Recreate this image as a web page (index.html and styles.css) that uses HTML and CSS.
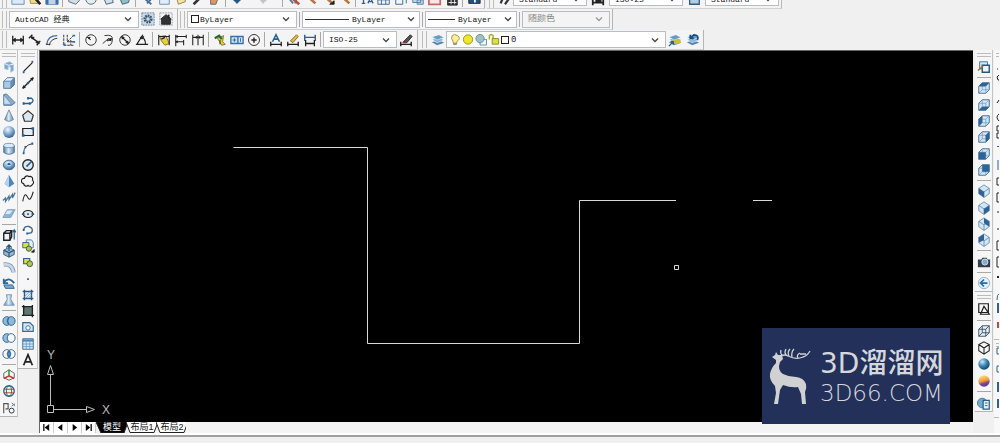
FILE: index.html
```html
<!DOCTYPE html>
<html lang="zh-CN">
<head>
<meta charset="utf-8">
<title>AutoCAD 经典</title>
<link rel="stylesheet" href="styles.css">
</head>
<body>
<svg class="defs" aria-hidden="true">
  <defs>
    <linearGradient id="steel" x1="0" y1="0" x2="1" y2="0"><stop offset="0" stop-color="#4f7fae"/><stop offset=".45" stop-color="#dcebf8"/><stop offset="1" stop-color="#5c86b0"/></linearGradient>
    <radialGradient id="ball" cx=".4" cy=".3" r=".7"><stop offset="0" stop-color="#eef6fd"/><stop offset=".5" stop-color="#8bb2d8"/><stop offset="1" stop-color="#38658f"/></radialGradient>
    <radialGradient id="globe" cx=".35" cy=".3" r=".75"><stop offset="0" stop-color="#c9ecf8"/><stop offset=".5" stop-color="#3e88b8"/><stop offset="1" stop-color="#123f66"/></radialGradient>
    <linearGradient id="sunset" x1=".3" y1="0" x2=".6" y2="1"><stop offset="0" stop-color="#ffe08a"/><stop offset=".5" stop-color="#ef9a35"/><stop offset=".7" stop-color="#8a4680"/><stop offset="1" stop-color="#4a3aa8"/></linearGradient>
    <symbol id="chevron" viewBox="0 0 8 8"><path d="M1 2.5 4 5.5 7 2.5" fill="none" stroke="#444" stroke-width="1.3"/></symbol>
    <symbol id="cube" viewBox="0 0 16 16"><path d="M2 6 6 2H14V10L10 14H2Z" fill="#d3e6f5" stroke="#3c678f"/><path d="M2 6H10V14M10 6 14 2M6 2V10H14M6 10 2 14" fill="none" stroke="#6f98bd" stroke-width=".8"/></symbol>
    <symbol id="iso" viewBox="0 0 16 16"><path d="M8 1 14 5V11L8 15.500 2 11V5Z" fill="#d3e6f5" stroke="#4a769e" stroke-width=".8"/><path d="M2 5 8 9 14 5M8 9V15" fill="none" stroke="#4a769e" stroke-width=".8"/></symbol>
    <symbol id="layers" viewBox="0 0 16 16"><path d="M1 10.5 9 8 15 11 7 14Z" fill="#5589b3"/><path d="M1 7.5 9 5 15 8 7 11Z" fill="#8ab3d2" stroke="#fff" stroke-width=".6"/><path d="M1 4.5 9 2 15 5 7 8Z" fill="#659bc4" stroke="#fff" stroke-width=".6"/></symbol>
  </defs>
</svg>

<header class="toolbars">
  <div class="row row-top">
    <div class="bar" role="toolbar" aria-label="标准">
      <span class="grip"></span>
      <button aria-label="新建"><svg viewBox="0 0 16 16"><path d="M1 1H15V14H1Z" fill="#dbeaf6" stroke="#5e89b0"/></svg></button>
      <button aria-label="打开"><svg viewBox="0 0 16 16"><path d="M1 3H8L14 13H3Z" fill="#edd98a" stroke="#9a8340"/><path d="M8 7 14 14" stroke="#222" stroke-width="3"/></svg></button>
      <button aria-label="保存"><svg viewBox="0 0 16 16"><path d="M1 1H15V14H1Z" fill="#3c70a8" stroke="#3c70a8"/><path d="M4 8H12V14H4Z" fill="#bcd3e8" stroke="none"/></svg></button>
      <span class="sep"></span>
      <button aria-label="打印"><svg viewBox="0 0 16 16"><path d="M2 4H14V10L10 14 2 11Z" fill="#d6dde4" stroke="#526475"/></svg></button>
      <button aria-label="打印预览"><svg viewBox="0 0 16 16"><circle cx="8" cy="8" r="6" fill="#e2edf4" stroke="#566"/></svg></button>
      <button aria-label="发布"><svg viewBox="0 0 16 16"><path d="M2 4H12L14 12 6 14Z" fill="#cfdfeb" stroke="#456"/></svg></button>
      <button aria-label="三维打印"><svg viewBox="0 0 16 16"><path d="M2 7 14 5 12 12 5 14Z" fill="#8fbfc9" stroke="#456"/></svg></button>
      <span class="sep"></span>
      <button aria-label="剪切"><svg viewBox="0 0 16 16"><path d="M2 5 13 14M8 13 13 8" stroke="#456a9b" stroke-width="2"/></svg></button>
      <button aria-label="复制"><svg viewBox="0 0 16 16"><path d="M3 2H14V14H3Z" fill="#dfeefa" stroke="#5e89b0"/></svg></button>
      <button aria-label="粘贴"><svg viewBox="0 0 16 16"><path d="M2 3 12 2 13 11 5 14Z" fill="#f1e4a5" stroke="#8a7c45"/></svg></button>
      <button aria-label="特性匹配"><svg viewBox="0 0 16 16"><path d="M3 14 13 4" stroke="#333" stroke-width="3"/></svg></button>
      <button aria-label="块编辑器"><svg viewBox="0 0 16 16"><path d="M3 3H13L9 14H3Z" fill="#f09348" stroke="#386ca8"/></svg></button>
      <span class="sep"></span>
      <button aria-label="放弃"><svg viewBox="0 0 16 16"><path d="M4 9H12L8 13Z" fill="#20568f" stroke="#20568f"/></svg></button>
      <span class="space"></span>
      <button aria-label="重做"><svg viewBox="0 0 16 16"><path d="M5 9H12L8 13Z" fill="#c0c5c9" stroke="#c0c5c9"/></svg></button>
      <span class="space"></span><span class="sep"></span>
      <button aria-label="平移"><svg viewBox="0 0 16 16"><path d="M2 4 14 14M10 8V13" stroke="#b65145" stroke-width="3"/><path d="M2 7 7 13" stroke="#4674a7" stroke-width="2"/></svg></button>
      <button aria-label="缩放"><svg viewBox="0 0 16 16"><path d="M3 4 13 13" stroke="#b57643" stroke-width="3"/></svg></button>
      <button aria-label="窗口缩放"><svg viewBox="0 0 16 16"><path d="M3 4 12 12" stroke="#b57643" stroke-width="3"/><path d="M10 14 15 10V14Z" fill="#222"/></svg></button>
      <button aria-label="上一个"><svg viewBox="0 0 16 16"><path d="M3 4 13 13" stroke="#b57643" stroke-width="3"/></svg></button>
      <span class="sep"></span>
      <button aria-label="特性"><svg viewBox="0 0 16 16"><path d="M2 13H6M4 9V13M9 13 12 7 15 13M9 11H14" stroke="#355f8d" stroke-width="1.5"/></svg></button>
      <button aria-label="设计中心"><svg viewBox="0 0 16 16"><path d="M1 3H14V14H1ZM1 9H14M5 9V14M10 9V14" fill="#edf5fb" stroke="#315b88"/></svg></button>
      <button aria-label="工具选项板"><svg viewBox="0 0 16 16"><path d="M2 2H10V14H2ZM8 8H14V13" fill="#edf5fb" stroke="#315b88"/></svg></button>
      <button aria-label="图纸集"><svg viewBox="0 0 16 16"><path d="M2 7H11V12H2ZM7 9H14V14H7Z" fill="#bdd5e8" stroke="#4d7ba4"/></svg></button>
      <button aria-label="标记集"><svg viewBox="0 0 16 16"><path d="M1 4H14V14H1Z" fill="#f8e8e8" stroke="#c96767" stroke-width="2"/></svg></button>
      <button aria-label="计算器"><svg viewBox="0 0 16 16"><path d="M3 2H14V15H3Z" fill="#333"/><path d="M4 8H13M4 12H13M7 6V14M11 6V14" stroke="#eee"/></svg></button>
      <span class="sep"></span>
      <button aria-label="帮助"><svg viewBox="0 0 16 16"><path d="M2 2H15V13H2Z" fill="#1d528c"/><path d="M8 9H9V12" stroke="#fff" stroke-width="2"/></svg></button>
    </div>
    <div class="bar bar-gap" role="toolbar" aria-label="样式">
      <span class="grip"></span>
      <button aria-label="文字样式"><svg viewBox="0 0 16 16"><path d="M3 13 6 6M8 14 13 7" stroke="#333" stroke-width="2.5"/></svg></button>
      <span class="combo w74"><select aria-label="文字样式列表"><option>Standard</option></select><svg><use href="#chevron"/></svg></span>
      <button class="wide" aria-label="标注样式"><svg viewBox="0 0 16 16"><path d="M2 12H14M2 9V15M14 9V15M5 10H12" stroke="#222" stroke-width="2"/></svg></button>
      <span class="combo w74"><select aria-label="标注样式列表"><option>ISO-25</option></select><svg><use href="#chevron"/></svg></span>
      <button class="wide" aria-label="表格样式"><svg viewBox="0 0 16 16"><path d="M3 3H14V14H3Z" fill="#b5cde3" stroke="#315b88" stroke-width="1.5"/></svg></button>
      <span class="combo w74"><select aria-label="表格样式列表"><option>Standard</option></select><svg><use href="#chevron"/></svg></span>
    </div>
  </div>

  <div class="row row-mid">
    <div class="bar" role="toolbar" aria-label="工作空间">
      <span class="grip"></span>
      <span class="combo w130"><select aria-label="工作空间"><option>AutoCAD 经典</option></select><svg><use href="#chevron"/></svg></span>
      <button class="wide" aria-label="工作空间设置"><svg viewBox="0 0 16 16"><path d="M1 1H15V15H1Z" fill="#cbdbe8" stroke="#5c7690" stroke-dasharray="2 1"/><circle cx="8" cy="8" r="4" stroke="#36516c" stroke-width="2.4" stroke-dasharray="2 1"/><circle cx="8" cy="8" r="2.6" stroke="#36516c"/></svg></button>
      <button class="wide" aria-label="我的工作空间"><svg viewBox="0 0 16 16"><path d="M1 1H15V15H1Z" stroke="#8496a5" stroke-dasharray="2 1"/><path d="M2 8 8 3 14 8H13V14H3V8Z" fill="#333"/><path d="M11 3V7" stroke-width="2"/></svg></button>
    </div>
    <div class="bar" role="toolbar" aria-label="特性">
      <span class="grip"></span>
      <span class="combo w110 has-swatch"><i class="swatch"></i><select aria-label="颜色"><option>ByLayer</option></select><svg><use href="#chevron"/></svg></span>
      <span class="sep"></span>
      <span class="combo w118 has-line"><i class="line"></i><select aria-label="线型"><option>ByLayer</option></select><svg><use href="#chevron"/></svg></span>
      <span class="sep"></span>
      <span class="combo w92 has-line"><i class="line"></i><select aria-label="线宽"><option>ByLayer</option></select><svg><use href="#chevron"/></svg></span>
      <span class="sep"></span>
      <span class="combo w86 off"><select aria-label="打印样式" disabled><option>随颜色</option></select><svg><use href="#chevron"/></svg></span>
    </div>
  </div>

  <div class="row row-low">
    <div class="bar" role="toolbar" aria-label="标注">
      <span class="grip"></span>
      <button aria-label="线性"><svg viewBox="0 0 16 16"><path d="M2 3V13M14 3V13M2 8H14" stroke-width="1.5"/><path d="M2 8 5 6V10ZM14 8 11 6V10Z" fill="#222"/></svg></button>
      <button aria-label="对齐"><svg viewBox="0 0 16 16"><path d="M1 6 5 2M10 14 14 9M4 5 12 11" stroke-width="1.5"/><path d="M3 4 7 5 5 7ZM13 12 9 11 11 9Z" fill="#222"/></svg></button>
      <button aria-label="弧长"><svg viewBox="0 0 16 16"><path d="M2 13Q3 3 14 3" stroke="#4475a4" stroke-width="1.6"/><path d="M5 14Q6 7 14 6M1 13H6"/></svg></button>
      <button aria-label="坐标"><svg viewBox="0 0 16 16"><path d="M2 2V14H14M6 2V10H13M6 10 13 3M10 8V14" stroke-dasharray="3 1"/><path d="M1 13H4M12 3H15M12 10H15" stroke="#3673ad" stroke-width="2"/></svg></button>
      <span class="sep"></span>
      <button aria-label="半径"><svg viewBox="0 0 16 16"><circle cx="8" cy="8" r="6"/><path d="M8 8 4 5"/><path d="M4 5 7 5 6 7Z" fill="#222"/></svg></button>
      <button aria-label="折弯"><svg viewBox="0 0 16 16"><path d="M4 3Q14 1 13 8T8 14M2 12 9 6 7 9 12 8"/><path d="M9 7 12 6 11 9Z" fill="#222"/></svg></button>
      <button aria-label="直径"><svg viewBox="0 0 16 16"><circle cx="8" cy="8" r="6"/><path d="M4 4 12 12" stroke-width="1.4"/><path d="M4 4 7 5 5 7ZM12 12 9 11 11 9Z" fill="#222"/></svg></button>
      <button aria-label="角度"><svg viewBox="0 0 16 16"><path d="M9 2 2 13H15M7 4Q12 6 12 13" stroke-width="1.4"/><path d="M6 5 10 4 8 7Z" fill="#222"/></svg></button>
      <span class="sep"></span>
      <button aria-label="快速标注"><svg viewBox="0 0 16 16"><path d="M3 4 10 3 14 12 9 14 5 9Z" fill="#e4d331" stroke="#777022"/><path d="M2 2V14M14 2V14M2 4H14M5 7 9 5" stroke-width="1.3"/></svg></button>
      <button aria-label="基线"><svg viewBox="0 0 16 16"><path d="M2 2V15M2 4H14M2 10H11M14 2V6M11 8V14" stroke-width="1.2"/><path d="M2 4 4 3V5ZM2 10 4 9V11Z" fill="#222"/></svg></button>
      <button aria-label="连续"><svg viewBox="0 0 16 16"><path d="M2 2V14M8 2V14M14 2V14M2 5H14" stroke-width="1.2"/><path d="M8 5 6 4V6ZM8 5 10 4V6Z" fill="#222"/></svg></button>
      <span class="sep"></span>
      <button aria-label="公差"><svg viewBox="0 0 16 16"><path d="M5 6 12 3 11 10 14 13 10 14Z" fill="#e1d231" stroke="#7c7429"/><path d="M2 6 7 3 10 7" stroke="#26673d" stroke-width="2.4"/><path d="M8 8V13"/></svg></button>
      <button aria-label="形位公差"><svg viewBox="0 0 16 16"><path d="M1 4H15V12H1ZM9 4V12" fill="#cfe3f5" stroke="#3470aa" stroke-width="1.5"/><path d="M3 8H7M5 6V10M12 6V10" stroke="#245f99"/></svg></button>
      <button aria-label="圆心标记"><svg viewBox="0 0 16 16"><circle cx="8" cy="8" r="6.3"/><path d="M5 8H11M8 5V11" stroke-width="1.6"/></svg></button>
      <span class="sep"></span>
      <button aria-label="编辑标注"><svg viewBox="0 0 16 16"><path d="M4 10 8 2 12 10M5 7H11" stroke="#245f99" stroke-width="1.8"/><path d="M2 10V15M14 10V15M2 13H14" stroke-width="1.5"/></svg></button>
      <button aria-label="编辑标注文字"><svg viewBox="0 0 16 16"><path d="M5 9 12 2 14 4 8 11Z" fill="#e6b842" stroke="#806328"/><path d="M2 10V15M14 10V15M2 13H14" stroke-width="1.5"/></svg></button>
      <button aria-label="标注更新"><svg viewBox="0 0 16 16"><path d="M2 2V9M14 2V9M2 5H14" stroke="#245f99" stroke-width="1.6"/><path d="M3 8V15M13 8V15M3 12H13" stroke-width="1.5"/></svg></button>
      <span class="sep"></span>
      <span class="combo w74"><select aria-label="标注样式"><option>ISO-25</option></select><svg><use href="#chevron"/></svg></span>
      <button class="wide" aria-label="标注样式管理"><svg viewBox="0 0 16 16"><path d="M5 10 13 2 15 4 9 11Z" fill="#555"/><path d="M2 10V15M14 10V15M2 13H14" stroke-width="1.6"/><path d="M4 11H8" stroke="#a33" stroke-width="1.6"/></svg></button>
    </div>
    <div class="bar bar-gap" role="toolbar" aria-label="图层">
      <span class="grip"></span>
      <button aria-label="图层特性"><svg viewBox="0 0 16 16"><use href="#layers" stroke="none"/></svg></button>
      <span class="combo layer-combo">
        <span class="layer-state" aria-hidden="true">
          <svg viewBox="0 0 12 14"><path d="M4 9Q1 6 3 3T9 3T8 9V11H4Z" fill="#f8ee9b" stroke="#a49133"/><path d="M4 12H8" stroke="#555"/></svg>
          <svg viewBox="0 0 12 14"><circle cx="6" cy="7" r="5" fill="#f0e52f" stroke="#959423"/></svg>
          <svg viewBox="0 0 12 14"><path d="M5 7H12V13H5Z" fill="#eef6fa" stroke="#658da6"/><circle cx="5" cy="6" r="4.5" fill="#9bbfca" stroke="#71927e"/></svg>
          <svg viewBox="0 0 12 14"><path d="M1 7V3Q3 0 5 3V7" stroke="#aaa827" stroke-width="1.6"/><path d="M4 6H11V12H4Z" fill="#dddf42" stroke="#868b24"/></svg>
          <i class="swatch"></i>
        </span>
        <select aria-label="图层"><option>0</option></select><svg class="arrow"><use href="#chevron"/></svg>
      </span>
      <button class="wide" aria-label="置为当前"><svg viewBox="0 0 16 16"><use href="#layers" stroke="none"/><path d="M5 8 14 7 15 11 8 13Z" fill="#cdbd3c" stroke="none"/><path d="M1 15 6 10M3 10H6V13" stroke="#245f99" stroke-width="1.5"/></svg></button>
      <button aria-label="上一个图层"><svg viewBox="0 0 16 16"><use href="#layers" stroke="none"/><path d="M13 8Q15 2 9 2L6 5M5 2V6H9" stroke="#174f89" stroke-width="2"/></svg></button>
    </div>
  </div>
</header>

<main class="workspace">
  <div class="dock dock-model" role="toolbar" aria-label="建模" aria-orientation="vertical">
    <span class="grip"></span>
    <button aria-label="多段体"><svg viewBox="0 0 16 16"><path d="M3 4 9 2 13 5V12L10 14V8L7 7V11L3 10Z" fill="#78a5cf" stroke="#a9c5df"/><path d="M3 4 7 6 13 5" stroke="#fff"/></svg></button>
    <button aria-label="长方体"><svg viewBox="0 0 16 16"><path d="M2 6 6 2H14V10L10 14H2Z" fill="#6592bd" stroke="#365c83"/><path d="M2 6 6 2H14L10 6Z" fill="#e3f0fb" stroke="#6d8fb0"/><path d="M2 6H10V14H2Z" fill="#a8c9e6" stroke="#6d8fb0"/></svg></button>
    <button aria-label="楔体"><svg viewBox="0 0 16 16"><path d="M2 2 5 1 15 11 11 14H2Z" fill="#89add0" stroke="#456d93"/><path d="M2 2 11 13H2Z" fill="#c6dcef" stroke="#6d8fb0"/></svg></button>
    <button aria-label="圆锥体"><svg viewBox="0 0 16 16"><path d="M8 1 3 12Q8 16 13 12Z" fill="url(#steel)" stroke="#68859f"/></svg></button>
    <button aria-label="球体"><svg viewBox="0 0 16 16"><circle cx="8" cy="8" r="6.8" fill="url(#ball)" stroke="none"/></svg></button>
    <button aria-label="圆柱体"><svg viewBox="0 0 16 16"><path d="M2 4V12Q8 16 14 12V4Z" fill="url(#steel)" stroke="#456d93"/><ellipse cx="8" cy="4" rx="6" ry="2.5" fill="#d9eaf8" stroke="#6f92b4"/></svg></button>
    <button aria-label="圆环体"><svg viewBox="0 0 16 16"><ellipse cx="8" cy="8" rx="6.5" ry="5.5" fill="url(#ball)" stroke="#426c95"/><ellipse cx="8" cy="7" rx="2.5" ry="1.8" fill="#285884" stroke="#dcebf7"/></svg></button>
    <button aria-label="棱锥体"><svg viewBox="0 0 16 16"><path d="M8 1 3 11 8 15 14 11Z" fill="#4e84b8" stroke="none"/><path d="M8 1 3 11 8 15Z" fill="#b3d2eb" stroke="none"/></svg></button>
    <button aria-label="螺旋"><svg viewBox="0 0 16 16"><path d="M1 12 4 9 4 13 8 7 8 11 12 5 12 9 15 3" stroke="#4b7499" stroke-width="1.4"/></svg></button>
    <button aria-label="平面曲面"><svg viewBox="0 0 16 16"><path d="M6 3H15L10 12H1Z" fill="#8db3d6" stroke="#7c9dbb"/><path d="M6 4H12L9 8H4Z" fill="#dbeafa" stroke="none"/></svg></button>
    <span class="sep"></span>
    <button aria-label="拉伸"><svg viewBox="0 0 16 16"><path d="M2 6H9V14H2ZM2 6 5 3H11L9 6M11 3V10L9 14" fill="#edf4fa" stroke-width="1.6"/><path d="M14 13V3M12 5 14 2 16 5" stroke="#245f99" stroke-width="1.4"/></svg></button>
    <button aria-label="按住并拖动"><svg viewBox="0 0 16 16"><path d="M2 7 8 4 14 7V12L8 15 2 12Z" fill="#94b7d4" stroke="#315777"/><path d="M2 7 8 10 14 7M8 10V15M8 8V1M5 4 8 1 11 4" stroke="#315777" stroke-width="1.4"/></svg></button>
    <button aria-label="扫掠"><svg viewBox="0 0 16 16"><path d="M2 4Q12 3 13 13" stroke="#7e9cb4" stroke-width="5"/><path d="M2 4Q12 3 13 13" stroke="#c5d9e9" stroke-width="3"/></svg></button>
    <button aria-label="旋转"><svg viewBox="0 0 16 16"><path d="M2 9H12L14 13H4Z" fill="#77a9d2" stroke="#315f8b"/><path d="M14 7Q8-1 2 6M2 2V7H7" stroke="#22689f" stroke-width="2"/></svg></button>
    <button aria-label="放样"><svg viewBox="0 0 16 16"><path d="M5 2H11L10 7 14 14H2L6 7Z" fill="url(#steel)" stroke="#7595b1"/></svg></button>
    <span class="sep"></span>
    <button aria-label="并集"><svg viewBox="0 0 16 16"><ellipse cx="5.500" cy="8" rx="4.500" ry="5" fill="#8eb9dc" stroke="#285e8e"/><ellipse cx="10.500" cy="8" rx="4.500" ry="5" fill="#8eb9dc" stroke="#285e8e"/><path d="M8 4Q5 8 8 12" stroke="#285e8e"/></svg></button>
    <button aria-label="差集"><svg viewBox="0 0 16 16"><ellipse cx="5.500" cy="8" rx="4.500" ry="5" fill="#93bddd" stroke="#285e8e"/><ellipse cx="10.500" cy="8" rx="4.500" ry="5" fill="#f3f8fc" stroke="#285e8e"/></svg></button>
    <button aria-label="交集"><svg viewBox="0 0 16 16"><ellipse cx="5.500" cy="8" rx="4.500" ry="5" stroke="#285e8e"/><ellipse cx="10.500" cy="8" rx="4.500" ry="5" stroke="#285e8e"/><path d="M8 4Q11 8 8 12 5 8 8 4" fill="#73a6d0" stroke="#285e8e"/></svg></button>
    <span class="sep"></span>
    <button aria-label="三维移动"><svg viewBox="0 0 16 16"><path d="M2 6 8 2 14 6V11L8 14 2 11Z" stroke="#555"/><path d="M8 2V9" stroke="#26872f" stroke-width="1.6"/><path d="M8 9 2 12" stroke="#c33" stroke-width="1.8"/><path d="M8 9 14 12" stroke="#ca3333" stroke-width="1.8"/></svg></button>
    <button aria-label="三维旋转"><svg viewBox="0 0 16 16"><circle cx="8" cy="8" r="6" stroke="#2761a5" stroke-width="1.5"/><ellipse cx="8" cy="8" rx="3" ry="6" stroke="#26773a"/><path d="M2 6H14M2 10H14" stroke="#bc3434"/></svg></button>
    <button aria-label="三维对齐"><svg viewBox="0 0 16 16"><path d="M2 14V3H7V9H4" stroke="#555" stroke-width="1.3"/><path d="M11 2 13 4 11 6M14 3V6" stroke="#26679e"/><circle cx="11" cy="11" r="2.800"/></svg></button>
  </div>

  <div class="dock dock-draw" role="toolbar" aria-label="绘图" aria-orientation="vertical">
    <span class="grip"></span>
    <button aria-label="直线"><svg viewBox="0 0 16 16"><path d="M3 13 13 3" stroke-width="1.4"/><path d="M2 14H4M12 2H14" stroke="#245f99" stroke-width="2.5"/></svg></button>
    <button aria-label="构造线"><svg viewBox="0 0 16 16"><path d="M2 14 14 2" stroke-width="1.6"/><path d="M2 14 5 13 3 11ZM14 2 11 3 13 5Z" fill="#222"/><circle cx="8" cy="8" r="1.500" fill="#245f99" stroke="none"/></svg></button>
    <button aria-label="多段线"><svg viewBox="0 0 16 16"><path d="M2 12H11Q16 9 12 6H8" stroke="#2a5f93" stroke-width="1.5"/><path d="M2 12H4M9 12H11M7 6H9" stroke="#245f99" stroke-width="2.7"/></svg></button>
    <button aria-label="正多边形"><svg viewBox="0 0 16 16"><path d="M8 2 14 7 12 14H4L2 7Z" fill="#dae8f3" stroke="#333" stroke-width="1.4"/></svg></button>
    <button aria-label="矩形"><svg viewBox="0 0 16 16"><path d="M2 4H14V12H2Z" fill="#e4eef7" stroke-width="1.4"/><path d="M1 12H4M12 4H15" stroke="#245f99" stroke-width="3"/></svg></button>
    <button aria-label="圆弧"><svg viewBox="0 0 16 16"><path d="M3 14Q3 5 13 3"/><path d="M2 14H4M4 7H6M12 3H14" stroke="#245f99" stroke-width="2.5"/></svg></button>
    <button aria-label="圆"><svg viewBox="0 0 16 16"><circle cx="8" cy="8" r="6" fill="#dce9f4" stroke-width="1.5"/><path d="M7 9 12 4M6 9H8" stroke="#245f99" stroke-width="1.8"/></svg></button>
    <button aria-label="修订云线"><svg viewBox="0 0 16 16"><path d="M4 5A3 3 0 0 1 9 3A3 3 0 0 1 13 7A3 3 0 0 1 13 12A3 3 0 0 1 8 13A3 3 0 0 1 3 11A3 3 0 0 1 4 5Z" stroke-width="1.3"/></svg></button>
    <button aria-label="样条曲线"><svg viewBox="0 0 16 16"><path d="M2 13C4 2 6 5 8 9S12 9 14 2" stroke-width="1.2"/></svg></button>
    <button aria-label="椭圆"><svg viewBox="0 0 16 16"><ellipse cx="8" cy="8" rx="5.500" ry="4" fill="#dfeaf3" stroke-width="1.4"/><path d="M1 8H4M12 8H15M7 8H9" stroke="#245f99" stroke-width="2"/></svg></button>
    <button aria-label="椭圆弧"><svg viewBox="0 0 16 16"><path d="M3 8Q4 3 9 4 15 6 12 11L8 12" stroke="#426c91" stroke-width="1.6"/><path d="M2 8H4M6 12H8" stroke="#245f99" stroke-width="2.5"/></svg></button>
    <button aria-label="插入块"><svg viewBox="0 0 16 16"><path d="M6 1H12L14 4V10H6Z" fill="#e5f0f8" stroke="#4677a3"/><path d="M2 4H9V10H2Z" fill="#d5e047" stroke="#315f8d"/><circle cx="9" cy="11" r="3" fill="#abc94a" stroke="#354"/><path d="M12 15H15V12Z" fill="#222"/></svg></button>
    <button aria-label="创建块"><svg viewBox="0 0 16 16"><path d="M3 4H10V10H3Z" fill="#d5e047" stroke="#315f8d" stroke-width="1.3"/><circle cx="10" cy="10" r="3.300" fill="#abc94a" stroke="#354"/></svg></button>
    <button aria-label="点"><svg viewBox="0 0 16 16"><path d="M7 8H9" stroke="#245f99" stroke-width="2"/></svg></button>
    <button aria-label="图案填充"><svg viewBox="0 0 16 16"><path d="M4 2V14M12 2V14M2 4H14M2 12H14" stroke="#23598e" stroke-width="1.6"/><path d="M4 10 10 4M5 12 12 5M8 12 12 8" stroke="#6592bd"/></svg></button>
    <button aria-label="渐变色"><svg viewBox="0 0 16 16"><path d="M3 3H13V13H3Z" fill="#5f7772" stroke-width="1.5"/><path d="M3 1V5M13 11V15M1 3H4M12 13H15M13 1V3M1 13H3" stroke-width="1.5"/></svg></button>
    <button aria-label="面域"><svg viewBox="0 0 16 16"><path d="M2 3H10L14 7V13H2Z" fill="#d5e6f5" stroke="#376b9b" stroke-width="1.4"/><circle cx="8" cy="9" r="2.500" fill="#f7fbff" stroke="#376b9b"/></svg></button>
    <button aria-label="表格"><svg viewBox="0 0 16 16"><path d="M2 2H14V14H2Z" fill="#ddebf8" stroke="#315f8d"/><path d="M2 4H14" stroke="#4c7fb5" stroke-width="2.5"/><path d="M2 8H14M2 11H14M6 4V14M10 4V14" stroke="#6a98c1"/></svg></button>
    <button aria-label="多行文字"><svg viewBox="0 0 16 16"><path d="M3 14 8 2 13 14M5 10H11" stroke-width="2"/></svg></button>
  </div>

  <section class="editor" aria-label="绘图区">
    <svg class="drawing" role="img" aria-label="图形">
      <g class="ink">
        <path d="M193.500 96.500H327.500V292.500H539.500V149.500H636M713 149.500H732"/>
        <path d="M634.500 214.500H638.500V218.500H634.500Z"/>
      </g>
      <g class="ucs">
        <path d="M7.500 354.500H13.500V361.500H7.500ZM10.500 354V323M14 358.500H46M10.500 314.500 7.500 323.500H13.500ZM54.500 358.500 46.500 355.500V361.500Z"/>
        <text x="7" y="308">Y</text><text x="62" y="363">X</text>
      </g>
    </svg>
    <nav class="tabs" aria-label="布局">
      <button class="step" aria-label="第一个"><svg viewBox="0 0 12 10"><path d="M3 1V9" stroke-width="1.6"/><path d="M9 1V9L4 5Z" fill="#000" stroke="none"/></svg></button>
      <button class="step" aria-label="前一个"><svg viewBox="0 0 12 10"><path d="M8 1V9L3 5Z" fill="#000" stroke="none"/></svg></button>
      <button class="step" aria-label="后一个"><svg viewBox="0 0 12 10"><path d="M4 1V9L9 5Z" fill="#000" stroke="none"/></svg></button>
      <button class="step" aria-label="最后一个"><svg viewBox="0 0 12 10"><path d="M9 1V9" stroke-width="1.6"/><path d="M3 1V9L8 5Z" fill="#000" stroke="none"/></svg></button>
      <button class="tab active"><svg viewBox="0 0 32 11" preserveAspectRatio="none"><path d="M0 0H32L28 11H5Z"/></svg><span>模型</span></button>
      <button class="tab"><svg viewBox="0 0 32 11" preserveAspectRatio="none"><path d="M0 0 4 10.500H28L32 0"/></svg><span>布局1</span></button>
      <button class="tab"><svg viewBox="0 0 32 11" preserveAspectRatio="none"><path d="M0 0 4 10.500H28L32 0"/></svg><span>布局2</span></button>
      <span class="scroll"></span>
    </nav>
    <aside class="brand">
      <svg viewBox="0 0 42 57" aria-hidden="true"><path class="body" d="M3 9 6 7 7 4 9 7 13 7 14 11 11 14Q8 22 14 26 20 29 27 29 35 30 37 36 38 40 36 44L37 56H33L32 46 29 39Q22 40 14 37L11 42 9 56H5L7 45 6 38Q0 32 1 26 2 20 7 15L7 12Z"/><path class="antler" d="M12 8Q16 6 19 8 27 12 34 9 38 8 41 3M13 7Q11 5 12 2M17 7Q15 4 17 1M20 8Q18 4 21 1M23 9Q22 4 25 1M29 10Q27 7 31 5M31 6H37"/></svg>
      <div class="brand-text"><strong>3D溜溜网</strong><span>3D66.COM</span></div>
    </aside>
  </section>

  <div class="side">
    <div class="dock dock-view" role="toolbar" aria-label="视图" aria-orientation="vertical">
      <span class="grip"></span>
      <button aria-label="命名视图"><svg viewBox="0 0 16 16"><path d="M3 2H12V10H3Z" fill="#d4e5f3" stroke="#386f9f"/><path d="M6 6H14V14H6Z" fill="#f1f6fa" stroke="#21588b" stroke-width="1.6"/><path d="M1 12 7 7" stroke="#b16b3a" stroke-width="1.6"/></svg></button>
      <span class="sep"></span>
      <button aria-label="俯视"><svg viewBox="0 0 16 16"><use href="#cube"/><path class="face" d="M2 6 6 2H14L10 6Z"/></svg></button>
      <button aria-label="仰视"><svg viewBox="0 0 16 16"><use href="#cube"/><path class="face" d="M2 14 6 10H14L10 14Z"/></svg></button>
      <button aria-label="左视"><svg viewBox="0 0 16 16"><use href="#cube"/><path class="face" d="M2 6 6 2V10L2 14Z"/></svg></button>
      <button aria-label="右视"><svg viewBox="0 0 16 16"><use href="#cube"/><path class="face" d="M10 6 14 2V10L10 14Z"/></svg></button>
      <button aria-label="前视"><svg viewBox="0 0 16 16"><use href="#cube"/><path class="face" d="M2 6H10V14H2Z"/></svg></button>
      <button aria-label="后视"><svg viewBox="0 0 16 16"><use href="#cube"/><path class="face" d="M6 2H14V10H6Z"/></svg></button>
      <span class="sep"></span>
      <button aria-label="西南等轴测"><svg viewBox="0 0 16 16"><use href="#iso"/><path class="face" d="M2 5 8 9V15L2 11Z"/></svg></button>
      <button aria-label="东南等轴测"><svg viewBox="0 0 16 16"><use href="#iso"/><path class="face" d="M8 9 14 5V11L8 15Z"/></svg></button>
      <button aria-label="东北等轴测"><svg viewBox="0 0 16 16"><use href="#iso"/><path class="face" d="M8 1 14 5V11L8 7Z"/></svg></button>
      <button aria-label="西北等轴测"><svg viewBox="0 0 16 16"><use href="#iso"/><path class="face" d="M2 5 8 1V8L2 11Z"/></svg></button>
      <span class="sep"></span>
      <button aria-label="相机"><svg viewBox="0 0 16 16"><path d="M1 5H5L6 3H11L12 5H15V14H1Z" fill="#343f4b" stroke="none"/><circle cx="9" cy="8" r="3.500" fill="#84add0" stroke="#dbe8f1"/></svg></button>
      <span class="sep"></span>
      <button aria-label="上一视图"><svg viewBox="0 0 16 16"><circle cx="8" cy="8" r="6.500" fill="#e7f0f7" stroke="#9aadbd"/><path d="M12 8H5M8 4 4 8 8 12" stroke="#276da7" stroke-width="2"/></svg></button>
    </div>
    <div class="dock dock-style" role="toolbar" aria-label="视觉样式" aria-orientation="vertical">
      <span class="grip"></span>
      <button aria-label="二维线框"><svg viewBox="0 0 16 16"><path d="M2 2H13V12H2ZM8 5 14 14H4Z" stroke-width="1.4"/></svg></button>
      <span class="sep"></span>
      <button aria-label="三维线框"><svg viewBox="0 0 16 16"><path d="M2 6 6 2H14V10L10 14H2ZM2 6H10V14M10 6 14 2M6 2V10H14M6 10 2 14" fill="#e3eff8" stroke="#334b60"/></svg></button>
      <button aria-label="三维隐藏"><svg viewBox="0 0 16 16"><path d="M8 1 14 4V11L8 15 2 11V4ZM2 4 8 8 14 4M8 8V15" stroke-width="1.2"/></svg></button>
      <button aria-label="真实"><svg viewBox="0 0 16 16"><circle cx="8" cy="8" r="6.500" fill="url(#globe)" stroke="none"/></svg></button>
      <button aria-label="概念"><svg viewBox="0 0 16 16"><circle cx="8" cy="8" r="6.500" fill="url(#sunset)" stroke="none"/></svg></button>
      <span class="sep"></span>
      <button aria-label="管理视觉样式"><svg viewBox="0 0 16 16"><circle cx="6" cy="8" r="5.500" fill="#74aaca" stroke="#3b789f"/><path d="M7 5H14V15H7Z" fill="#e6f0f8" stroke="#285e8e" stroke-width="1.4"/><path d="M9 8H12M9 11H12" stroke="#285e8e"/></svg></button>
    </div>
  </div>

  <div class="edge" aria-hidden="true">
    <svg>
      <path d="M2 3.500H5M2 6.500H5" class="soft"/>
      <path d="M3 19H4M5 25 3 27 4 30H5M3 53 5 50M5 64Q1 67 5 71M5 76H3V81H5M5 83H3V88H5M5 128H3V135H5M5 143H3V152H5M3 162H5M3 179H5M5 191H3V200H5M5 207H3V217H5"/>
      <path d="M3 96.500H5M4 110V120M3 250Q3 244 5 244M5 298H3V304H5M5 316H3V322H5" class="blue"/>
      <path d="M3 227H5" class="thick"/>
      <path d="M3 253H5V263H3ZM3 332H5V342H3ZM3 349H5V358H3Z" class="block"/>
      <path d="M3 272H5V278H3Z" class="red"/>
      <path d="M0 289.500H5M2 293.500H5M2 296.500H5M0 367.500H5" class="soft"/>
    </svg>
  </div>
</main>
<footer class="command"></footer>
</body>
</html>
```

FILE: styles.css
```css
* { box-sizing: border-box; }
body {
  margin: 0;
  height: 100vh;
  display: flex;
  flex-direction: column;
  overflow: hidden;
  background: #f0f0f0;
  color: #111;
  font-family: "Liberation Mono", "Noto Sans CJK SC", monospace;
  font-size: 8px;
}
.defs { position: absolute; width: 0; height: 0; }
button {
  display: grid;
  place-items: center;
  padding: 0;
  border: 0;
  background: none;
  flex: none;
  font: inherit;
  color: inherit;
}
button:hover { background: #d6e6f5; }
svg { fill: none; stroke: #222; }
button svg { width: 14px; height: 14px; display: block; }

/* horizontal toolbars */
.row { display: flex; }
.row-top { height: 9px; align-items: flex-end; overflow: hidden; }
.row-mid { height: 21px; }
.row-low { height: 20px; }
.bar {
  display: flex;
  align-items: center;
  padding: 0 2px;
  background: #f4f4f4;
  border-right: 1px solid #b4b4b4;
  border-bottom: 1px solid #d0d0d0;
}
.row-top .bar { height: 19px; }
.bar-gap { margin-left: 2px; }
.bar button { width: 17px; height: 17px; }
.bar button.wide { width: 18px; }
.row-top button.wide { width: 22px; }
.grip {
  flex: none;
  width: 5px;
  height: 17px;
  margin-right: 2px;
  border: 1px solid #bcbcbc;
  border-width: 0 1px;
}
.sep { flex: none; width: 1px; height: 15px; margin: 0 2px; background: #a8a8a8; }
.space { width: 9px; }

.combo {
  display: grid;
  grid-template-columns: auto 1fr 14px;
  align-items: center;
  height: 17px;
  background: #fff;
  border: 1px solid #b9bcc0;
}
.row-top .combo { height: 14px; }
.row-top .combo select { height: 12px; }
.combo select {
  grid-area: 1 / 2 / 2 / 4;
  width: 100%;
  height: 15px;
  padding: 0 14px 0 5px;
  border: 0;
  background: none;
  appearance: none;
  font: inherit;
  color: inherit;
}
.combo > svg { grid-area: 1 / 3; width: 8px; height: 8px; pointer-events: none; }
.w74 { width: 74px; }
.w86 { width: 88px; }
.w92 { width: 92px; }
.w110 { width: 110px; }
.w118 { width: 118px; }
.w130 { width: 130px; }
.combo.off { background: #f4f4f4; color: #888; font-size: 9px; }
.off select { opacity: 1; }
.off > svg { opacity: .5; }
.swatch { width: 8px; height: 8px; border: 1px solid #222; }
.has-swatch .swatch { margin-left: 3px; }
.has-swatch select { padding-left: 1px; }
.line { height: 1px; background: #333; margin-left: 2px; }
.has-line { grid-template-columns: 46px 1fr 12px; }
.has-line select { padding: 0 0 0 3px; }
.w92 { grid-template-columns: 29px 1fr 12px; }
.layer-combo { width: 220px; }
.layer-state { display: flex; align-items: center; gap: 1px; padding-left: 2px; }
.layer-state svg { width: 12px; height: 13px; }
.layer-combo select { padding-left: 2px; font-size: 9px; }

/* docked vertical toolbars */
.workspace { flex: 1; display: flex; min-height: 0; }
.dock {
  display: flex;
  flex-direction: column;
  align-self: flex-start;
  width: 18px;
  background: #f6f6f6;
  border-right: 1px solid #c4c4c4;
  border-bottom: 1px solid #b4b4b4;
}
.dock button { flex: 1; }
.dock .grip {
  width: 14px;
  height: 4px;
  margin: 3px auto 2px;
  border-width: 1px 0;
}
.dock .sep { width: 14px; height: 1px; margin: 2px auto; }
.dock-model { height: 367px; }
.dock-draw { height: 319px; width: 20px; margin-right: 1px; }
.dock-view { height: 242px; }
.dock-style { height: 120px; }
.side { width: 21px; padding-left: 2px; }
.face { fill: #2d6396; stroke: none; }
.edge { width: 6px; }
.edge svg { display: block; width: 6px; height: 100%; background: #f8f8f8; }
.edge .soft { stroke: #b8b8b8; }
.edge .blue { stroke: #2c6297; }
.edge .thick { stroke-width: 2; }
.edge .block { fill: #315f91; stroke: none; }
.edge .red { fill: #c24a42; stroke: none; }

/* model space */
.editor {
  position: relative;
  flex: 1;
  min-width: 0;
  display: flex;
  flex-direction: column;
  border-left: 1px solid #666;
  margin-bottom: 2px;
}
.drawing { flex: 1; width: 100%; min-height: 0; background: #000; border-top: 1px solid #666; }
.ink { stroke: #d8d8d8; }
.ucs { stroke: #bdbdbd; }
.ucs text { fill: #bdbdbd; stroke: none; font: 12px "Liberation Sans", sans-serif; }
.tabs { display: flex; height: 11px; background: #f0f0f0; }
.step { width: 14px; background: #fff; border-right: 1px solid #ccc; }
.step svg { width: 11px; height: 9px; }
.tab { width: 30px; height: 11px; font-family: "Liberation Sans", "Noto Sans CJK SC", sans-serif; font-size: 9px; line-height: 11px; }
.tab svg { grid-area: 1 / 1; width: 32px; height: 11px; fill: #fff; }
.tab span { grid-area: 1 / 1; z-index: 1; }
.tab.active { color: #fff; }
.tab.active svg { fill: #000; }
.scroll { flex: 1; background: #f4f4f4; }

.brand {
  position: absolute;
  right: 23px;
  bottom: 9px;
  display: flex;
  align-items: center;
  gap: 9px;
  width: 188px;
  height: 96px;
  padding-left: 7px;
  background: #22305a;
  color: #d5d7db;
}
.brand svg { flex: none; width: 42px; height: 57px; }
.brand .body { fill: #d0d1d2; stroke: none; }
.brand .antler { stroke: #d0d1d2; stroke-width: 1.3; }
.brand-text { display: flex; flex-direction: column; white-space: nowrap; }
.brand strong { font: 500 28px/34px "DejaVu Sans", "Noto Sans CJK SC", sans-serif; }
.brand span { font: 200 23px/24px "DejaVu Sans Light", "DejaVu Sans", sans-serif; }

.command { height: 8px; border-top: 2px solid #a0a0a0; background: #f0f0f0; box-shadow: 0 -2px #fff; }
```
